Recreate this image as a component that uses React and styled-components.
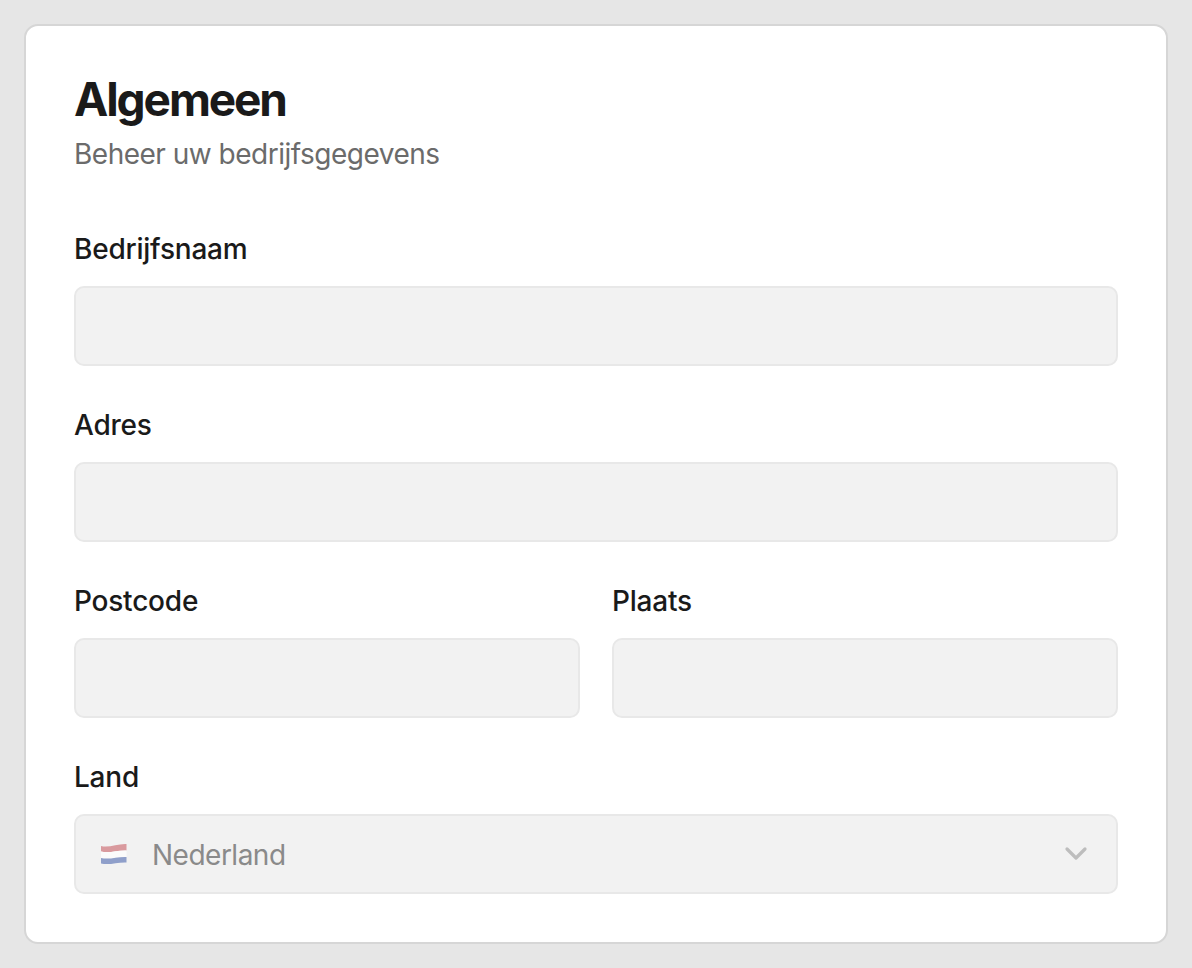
import React from 'react';
import styled, { createGlobalStyle } from 'styled-components';

const Global = createGlobalStyle`
  html, body { margin: 0; padding: 0; background: #e6e6e6; }
  body { font-family: Inter, "Liberation Sans", sans-serif; }
  * { box-sizing: border-box; }
`;
const Page = styled.main`
  height: 968px; padding: 24px 24px 0; background: #e6e6e6; overflow: hidden;
`;
const Card = styled.section`
  height: 920px; background: #fff; border: 2px solid #d6d6d6; border-radius: 14px;
  padding: 45px 48px 0;
`;
const Title = styled.h1`
  margin: 0; font-size: 46px; line-height: 56px; font-weight: 700; letter-spacing: -2.1px; color: #1a1a1a;
`;
const Subtitle = styled.p`
  margin: 9px 0 0; font-size: 28px; line-height: 36px; font-weight: 400; letter-spacing: -0.5px; color: #6b6b6b;
`;
const Form = styled.div`
  margin-top: 60px; display: flex; flex-direction: column; gap: 42px;
`;
const Row = styled.div`display: grid; grid-template-columns: 1fr 1fr; gap: 32px;`;
const Field = styled.div`display: flex; flex-direction: column; gap: 21px;`;
const Label = styled.label`
  padding-top: 1px; font-size: 28px; line-height: 32px; font-weight: 500; letter-spacing: -0.22px; color: #1a1a1a;
`;
const Input = styled.div`
  height: 80px; background: #f2f2f2; border: 2px solid #e8e8e8; border-radius: 10px;
  display: flex; align-items: center; padding: 0 24px;
`;
const FlagBox = styled.span`width: 30px; height: 22px; display: block; margin-right: 22px;`;
const Value = styled.span`
  flex: 1; padding-top: 1px; font-size: 28px; line-height: 32px; letter-spacing: -0.5px; color: #8a8a8a;
`;
const Chevron = styled.svg`width: 24px; height: 24px; display: block; margin-right: 4px;`;

const Flag = () => (
  <FlagBox>
    <svg width="30" height="22" viewBox="0 0 30 22">
      <path d="M1 3C9 5 18 .5 26.5 1V7.5C18 7 9 10.5 1 8.5Z" fill="#d99a9e" />
      <path d="M1 8.5C9 10.5 18 7 26.5 7.5V14C18 13.5 9 17 1 15Z" fill="#fbfbfb" />
      <path d="M1 15C9 17 18 13.5 26.5 14V19.5C18 19 9 22.5 1 20.5Z" fill="#8f9fca" />
    </svg>
  </FlagBox>
);

const TextField = ({ label }) => (
  <Field>
    <Label>{label}</Label>
    <Input />
  </Field>
);

const App = () => (
  <>
    <Global />
    <Page>
      <Card>
        <Title>Algemeen</Title>
        <Subtitle>Beheer uw bedrijfsgegevens</Subtitle>
        <Form>
          <TextField label="Bedrijfsnaam" />
          <TextField label="Adres" />
          <Row>
            <TextField label="Postcode" />
            <TextField label="Plaats" />
          </Row>
          <Field>
            <Label>Land</Label>
            <Input>
              <Flag />
              <Value>Nederland</Value>
              <Chevron viewBox="0 0 24 24" fill="none" stroke="#bdbdbd" strokeWidth="3.2" strokeLinecap="round" strokeLinejoin="round">
                <path d="M3 7l9 9 9-9" />
              </Chevron>
            </Input>
          </Field>
        </Form>
      </Card>
    </Page>
  </>
);
export default App;
